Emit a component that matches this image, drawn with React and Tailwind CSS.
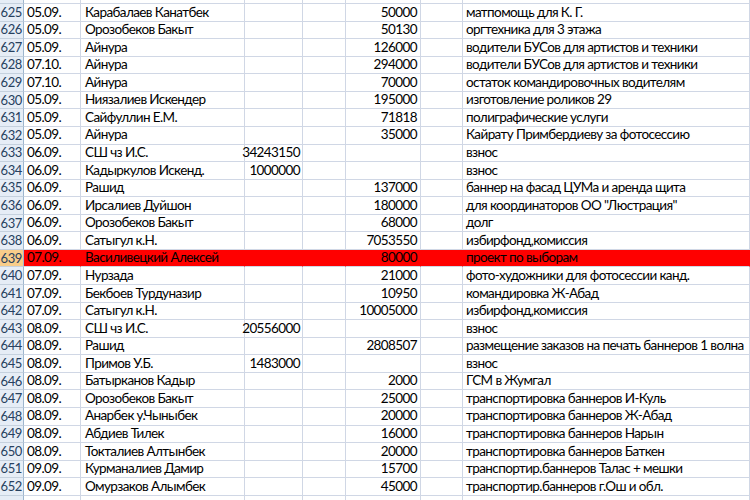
import React from "react";

const rows = [
  [625, "05.09.", "Карабалаев Канатбек", "", "50000", "матпомощь для К. Г."],
  [626, "05.09.", "Орозобеков Бакыт", "", "50130", "оргтехника для 3 этажа"],
  [627, "05.09.", "Айнура", "", "126000", "водители БУСов для артистов и техники"],
  [628, "07.10.", "Айнура", "", "294000", "водители БУСов для артистов и техники"],
  [629, "07.10.", "Айнура", "", "70000", "остаток командировочных водителям"],
  [630, "05.09.", "Ниязалиев Искендер", "", "195000", "изготовление роликов 29"],
  [631, "05.09.", "Сайфуллин Е.М.", "", "71818", "полиграфические услуги"],
  [632, "05.09.", "Айнура", "", "35000", "Кайрату Примбердиеву за фотосессию"],
  [633, "06.09.", "СШ чз И.С.", "34243150", "", "взнос"],
  [634, "06.09.", "Кадыркулов Искенд.", "1000000", "", "взнос"],
  [635, "06.09.", "Рашид", "", "137000", "баннер на фасад ЦУМа и аренда щита"],
  [636, "06.09.", "Ирсалиев Дуйшон", "", "180000", "для координаторов ОО \"Люстрация\""],
  [637, "06.09.", "Орозобеков Бакыт", "", "68000", "долг"],
  [638, "06.09.", "Сатыгул к.Н.", "", "7053550", "избирфонд,комиссия"],
  [639, "07.09.", "Василивецкий Алексей", "", "80000", "проект по выборам"],
  [640, "07.09.", "Нурзада", "", "21000", "фото-художники для фотосессии канд."],
  [641, "07.09.", "Бекбоев Турдуназир", "", "10950", "командировка Ж-Абад"],
  [642, "07.09.", "Сатыгул к.Н.", "", "10005000", "избирфонд,комиссия"],
  [643, "08.09.", "СШ чз И.С.", "20556000", "", "взнос"],
  [644, "08.09.", "Рашид", "", "2808507", "размещение заказов на печать баннеров 1 волна"],
  [645, "08.09.", "Примов У.Б.", "1483000", "", "взнос"],
  [646, "08.09.", "Батырканов Кадыр", "", "2000", "ГСМ в Жумгал"],
  [647, "08.09.", "Орозобеков Бакыт", "", "25000", "транспортировка баннеров И-Куль"],
  [648, "08.09.", "Анарбек у.Чыныбек", "", "20000", "транспортировка баннеров Ж-Абад"],
  [649, "08.09.", "Абдиев Тилек", "", "16000", "транспортировка баннеров Нарын"],
  [650, "08.09.", "Токталиев Алтынбек", "", "20000", "транспортировка баннеров Баткен"],
  [651, "09.09.", "Курманалиев Дамир", "", "15700", "транспортир.баннеров Талас + мешки"],
  [652, "09.09.", "Омурзаков Алымбек", "", "45000", "транспортир.баннеров г.Ош и обл."],
];

function Row({ r, h }) {
  const [num, date, name, d, amt, desc] = r;
  const red = num === 639;
  const cell = red
    ? "border-r border-b border-b-[#d0d7e5] border-r-[#ff0000] bg-[#ff0000]"
    : "border-r border-b border-[#d0d7e5] bg-white";
  return (
    <div className={`flex ${h} shrink-0`}>
      <div
        className={`w-[24px] shrink-0 border-r border-b border-r-[#9eb6ce] border-b-[#c5d1de] flex items-center justify-end pr-[1px] text-[#27415f] text-[13px] tracking-[-0.4px] ${
          red ? "bg-[#f8cd8a]" : "bg-[#e6edf6]"
        }`}
      >
        {num}
      </div>
      <div className={`w-[57px] shrink-0 ${cell} flex items-center pl-[3px]`}>{date}</div>
      <div className={`w-[164px] shrink-0 ${cell} flex items-center pl-[4px] whitespace-nowrap`}>{name}</div>
      <div className={`w-[58px] shrink-0 ${cell} flex items-center justify-end pr-[2px]`}>{d}</div>
      <div className={`w-[43px] shrink-0 ${cell}`}></div>
      <div className={`w-[75px] shrink-0 ${cell} flex items-center justify-end pr-[3px]`}>{amt}</div>
      <div className={`w-[42px] shrink-0 ${cell}`}></div>
      <div className={`flex-1 min-w-0 ${cell} flex items-center pl-[3px] whitespace-nowrap overflow-hidden`}>{desc}</div>
    </div>
  );
}

export default function App() {
  return (
    <div
      className="w-[750px] h-[500px] overflow-hidden bg-white flex flex-col text-[13.5px] tracking-[-0.6px] text-black leading-none"
      style={{ fontFamily: 'Lato, "Open Sans", sans-serif' }}
    >
      <Row r={[null, "", "", "", "", ""]} h="h-[4px] overflow-hidden" />
      {rows.map((r) => (
        <Row key={r[0]} r={r} h="h-[17.57px]" />
      ))}
      <Row r={[null, "", "", "", "", ""]} h="h-[17.57px]" />
    </div>
  );
}
